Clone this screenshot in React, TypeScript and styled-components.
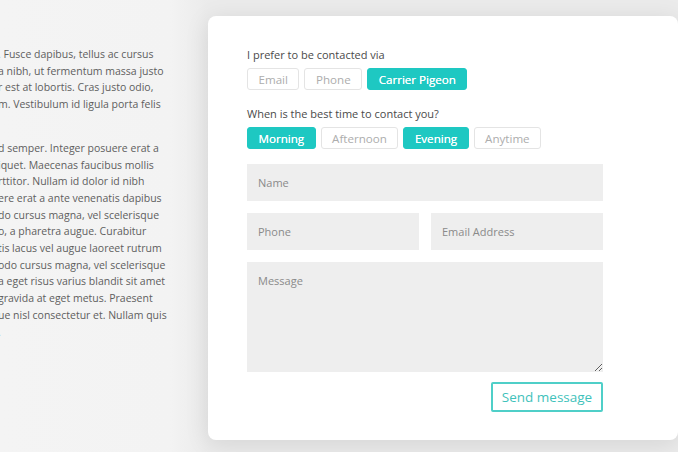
import React from "react";
import styled, { createGlobalStyle } from "styled-components";

const Global = createGlobalStyle`
  html, body { margin: 0; padding: 0; }
  body {
    width: 678px;
    height: 452px;
    overflow: hidden;
    background: #ececec;
    font-family: "Open Sans", "Noto Sans", sans-serif;
  }
  * { box-sizing: border-box; }
`;

const TEAL = "#1ec8c2";

const Page = styled.div`
  display: flex;
  width: 678px;
  height: 452px;
  background: linear-gradient(to right, #f4f4f4 0px, #f3f3f3 170px, #ebebeb 208px);
`;

const Side = styled.div`
  width: 208px;
  flex: none;
  padding-top: 46px;
  overflow: hidden;
  display: flex;
  flex-direction: column;
  gap: 27px;
`;

const Para = styled.div`
  display: flex;
  flex-direction: column;
  margin-left: -2px;
`;

const Line = styled.div`
  font-size: 10.5px;
  line-height: 16.7px;
  color: #5e5e5e;
  white-space: nowrap;
`;

const Card = styled.div`
  margin-top: 16px;
  width: 470px;
  height: 424px;
  flex: none;
  background: #fff;
  border-radius: 8px;
  box-shadow: 0 4px 24px rgba(0, 0, 0, 0.1);
  padding: 31px 75px 0 39px;
  display: flex;
  flex-direction: column;
`;

const Label = styled.div`
  font-size: 11px;
  line-height: 16px;
  color: #4a4a4a;
  margin-bottom: 5px;
`;

const ChipRow = styled.div<{ $mb: number }>`
  display: flex;
  gap: 5px;
  margin-bottom: ${(p) => p.$mb}px;
`;

const Chip = styled.button<{ $active?: boolean }>`
  height: 22px;
  padding: 0 10.5px;
  font-family: "Open Sans", "Noto Sans", sans-serif;
  font-size: 11.6px;
  font-weight: 400;
  border-radius: 3px;
  border: 1px solid ${(p) => (p.$active ? TEAL : "#e4e4e4")};
  background: ${(p) => (p.$active ? TEAL : "#fff")};
  color: ${(p) => (p.$active ? "#fff" : "#adadad")};
  text-shadow: ${(p) => (p.$active ? "0 0 0.4px #fff" : "none")};
  display: flex;
  align-items: center;
  cursor: pointer;
`;

const Field = styled.input`
  height: 37px;
  width: 100%;
  border: none;
  outline: none;
  background: #eeeeee;
  padding: 0 11px;
  font-family: "Open Sans", "Noto Sans", sans-serif;
  font-size: 11px;
  color: #555;
  &::placeholder { color: #8a8a8a; }
`;

const Pair = styled.div`
  display: grid;
  grid-template-columns: 1fr 1fr;
  gap: 12px;
  margin: 12px 0;
`;

const Area = styled.textarea`
  height: 110px;
  width: 100%;
  border: none;
  outline: none;
  background: #eeeeee;
  padding: 11px 11px;
  font-family: "Open Sans", "Noto Sans", sans-serif;
  font-size: 11px;
  color: #555;
  resize: vertical;
  &::placeholder { color: #8a8a8a; }
`;

const Actions = styled.div`
  display: flex;
  justify-content: flex-end;
  margin-top: 10px;
`;

const Send = styled.button`
  width: 112px;
  height: 30px;
  border: 2px solid #4fcfc8;
  border-radius: 2px;
  background: #fff;
  color: #3fc2bb;
  font-family: "Open Sans", "Noto Sans", sans-serif;
  font-size: 13.5px;
  cursor: pointer;
`;

const p1 = [
  ". Fusce dapibus, tellus ac cursus",
  "a nibh, ut fermentum massa justo",
  "r est at lobortis. Cras justo odio,",
  "m. Vestibulum id ligula porta felis",
];

const p2 = [
  "d semper. Integer posuere erat a",
  "iquet. Maecenas faucibus mollis",
  "rttitor. Nullam id dolor id nibh",
  "ere erat a ante venenatis dapibus",
  "do cursus magna, vel scelerisque",
  "o, a pharetra augue. Curabitur",
  "tis lacus vel augue laoreet rutrum",
  "odo cursus magna, vel scelerisque",
  "a eget risus varius blandit sit amet",
  " gravida at eget metus. Praesent",
  "ue nisl consectetur et. Nullam quis",
  ".",
];

export default function App() {
  const [via, setVia] = React.useState("Carrier Pigeon");
  const [times, setTimes] = React.useState<string[]>(["Morning", "Evening"]);
  const toggle = (t: string) =>
    setTimes((s) => (s.includes(t) ? s.filter((x) => x !== t) : [...s, t]));

  return (
    <>
      <Global />
      <Page>
        <Side>
          <Para>
            {p1.map((l, i) => (
              <Line key={i}>{l}</Line>
            ))}
          </Para>
          <Para>
            {p2.map((l, i) => (
              <Line key={i}>{l}</Line>
            ))}
          </Para>
        </Side>
        <Card>
          <Label>I prefer to be contacted via</Label>
          <ChipRow $mb={16}>
            {["Email", "Phone", "Carrier Pigeon"].map((o) => (
              <Chip key={o} $active={via === o} onClick={() => setVia(o)}>
                {o}
              </Chip>
            ))}
          </ChipRow>
          <Label>When is the best time to contact you?</Label>
          <ChipRow $mb={15}>
            {["Morning", "Afternoon", "Evening", "Anytime"].map((o) => (
              <Chip key={o} $active={times.includes(o)} onClick={() => toggle(o)}>
                {o}
              </Chip>
            ))}
          </ChipRow>
          <Field placeholder="Name" />
          <Pair>
            <Field placeholder="Phone" />
            <Field placeholder="Email Address" />
          </Pair>
          <Area placeholder="Message" />
          <Actions>
            <Send>Send message</Send>
          </Actions>
        </Card>
      </Page>
    </>
  );
}
